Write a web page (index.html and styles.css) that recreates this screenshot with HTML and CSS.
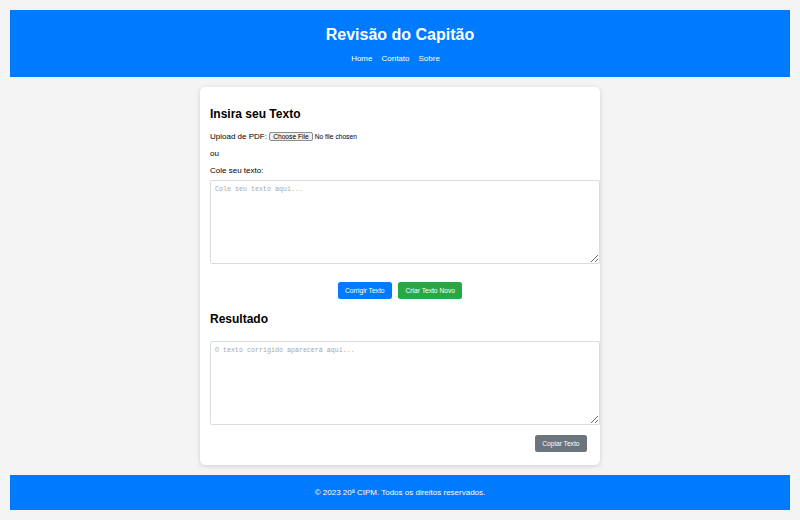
FILE: index.html
```html
<!DOCTYPE html>
<html lang="pt-BR">
<head>
<meta charset="UTF-8">
<title>Revisão do Capitão</title>
<link rel="stylesheet" href="styles.css">
</head>
<body>
<header class="site-header">
  <h1 class="site-title">Revisão do Capitão</h1>
  <nav class="site-nav">
    <a href="#">Home</a>
    <a href="#">Contato</a>
    <a href="#">Sobre</a>
  </nav>
</header>
<main class="card">
  <h2 class="section-title">Insira seu Texto</h2>
  <p class="line">Upload de PDF: <input type="file" class="file-input" accept=".pdf"></p>
  <p class="line">ou</p>
  <label class="field-label" for="entrada">Cole seu texto:</label>
  <textarea id="entrada" class="text-box" placeholder="Cole seu texto aqui..."></textarea>
  <div class="actions">
    <button class="btn btn-blue">Corrigir Texto</button>
    <button class="btn btn-green">Criar Texto Novo</button>
  </div>
  <h2 class="section-title result-title">Resultado</h2>
  <textarea class="text-box" placeholder="O texto corrigido aparecerá aqui..." readonly></textarea>
  <div class="copy-row">
    <button class="btn btn-gray">Copiar Texto</button>
  </div>
</main>
<footer class="site-footer">© 2023 20ª CIPM. Todos os direitos reservados.</footer>
</body>
</html>
```
FILE: styles.css
```css
html, body {
  margin: 0;
}
body {
  padding: 10px;
  background: #f4f4f4;
  font-family: "Liberation Sans", Arial, sans-serif;
  font-size: 8px;
  color: #000;
}
.site-header {
  background: #007bff;
  color: #fff;
  text-align: center;
  padding: 16px 0 14px;
}
.site-title {
  margin: 0 0 10px;
  font-size: 16px;
  font-weight: bold;
}
.site-nav {
  display: flex;
  justify-content: center;
}
.site-nav a {
  color: #fff;
  text-decoration: none;
  margin-right: 9px;
}
.card {
  display: block;
  width: 380px;
  margin: 10px auto;
  padding: 10px;
  background: #fff;
  border-radius: 5px;
  box-shadow: 0 1px 5px rgba(0, 0, 0, 0.15);
}
.section-title {
  font-size: 12px;
  font-weight: bold;
  margin: 10px 0 11px;
}
.line {
  margin: 8px 0;
}
.file-input {
  font-family: "Liberation Sans", Arial, sans-serif;
  font-size: 6.67px;
}
.file-input::file-selector-button {
  font: inherit;
  color: #000;
  background: #efefef;
  border: 1px solid #8d8d8d;
  border-radius: 2px;
  padding: 0 3px;
  margin-right: 2px;
}
.field-label {
  display: block;
  margin-bottom: 5px;
}
.text-box {
  display: block;
  width: 100%;
  height: 74px;
  margin: 0;
  padding: 4px;
  border: 1px solid #dcdcdc;
  border-radius: 2px;
  font-family: "Liberation Mono", "Courier New", monospace;
  font-size: 6.67px;
  resize: vertical;
}
.text-box::placeholder {
  color: #a9a9a9;
}
.actions {
  display: flex;
  justify-content: center;
  gap: 6px;
  margin: 18px 0 13px;
}
.btn {
  font-family: "Liberation Sans", Arial, sans-serif;
  font-size: 6.67px;
  line-height: 8px;
  color: #fff;
  border: none;
  border-radius: 2.5px;
  padding: 4.5px 7.5px;
  cursor: pointer;
}
.btn-blue { background: #007bff; }
.btn-green { background: #28a745; }
.btn-gray { background: #6c757d; }
.result-title {
  margin-bottom: 15px;
}
.copy-row {
  display: flex;
  justify-content: flex-end;
  padding: 10px 3px 3px 0;
}
.site-footer {
  background: #007bff;
  color: #fff;
  text-align: center;
  padding: 13px 0;
}
```
